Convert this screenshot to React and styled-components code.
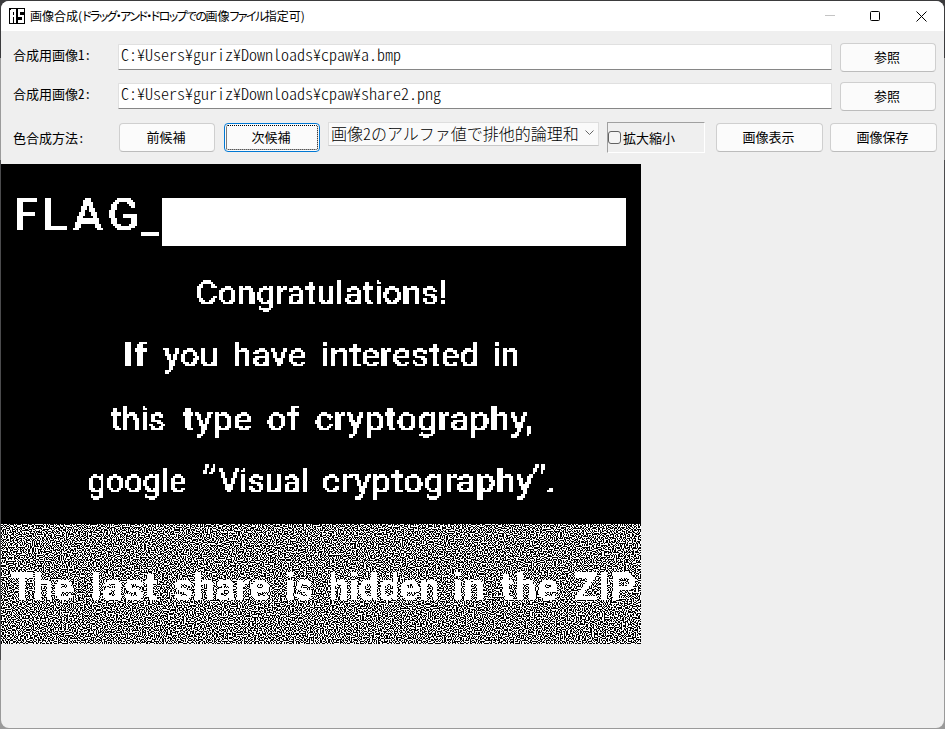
import React, { useEffect, useRef } from "react";
import styled, { createGlobalStyle } from "styled-components";

const GlobalStyle = createGlobalStyle`
  * { box-sizing: border-box; }
  body { margin: 0; background: #29292b; overflow: hidden; }
`;

const jp = `"Noto Sans CJK JP", "Noto Sans", sans-serif`;

const Desktop = styled.div`
  width: 945px;
  height: 729px;
  padding: 1px;
  background: linear-gradient(#3b3b3d 0 8%, #9b9b9b 8% 22%, #4b4b4d 22% 90.500%, #9a9a9a 90.500%);
`;
const Window = styled.main`
  width: 943px;
  height: 727px;
  border-radius: 8px;
  overflow: hidden;
  background: #efefef;
  font-family: ${jp};
  color: #000;
`;
const TitleBar = styled.header`
  height: 30px;
  display: flex;
  align-items: center;
  background: #fff;
  padding-left: 8px;
`;
const Title = styled.h1`
  flex: 1;
  margin: 0 0 0 5px;
  font-size: 12px;
  line-height: 28px;
  font-weight: 400;
  white-space: nowrap;
`;
const TitleText = styled.span`
  display: inline-block;
  font-feature-settings: ${(p) => (p.$tight ? '"palt"' : "normal")};
  letter-spacing: ${(p) => p.$spacing || 0}px;
`;
const CaptionButton = styled.button`
  width: 46px;
  height: 30px;
  padding: 0 0 0 ${(p) => p.$inset || 0}px;
  border: 0;
  background: none;
  display: grid;
  place-items: center;
`;
const Form = styled.section`
  height: 133px;
  padding: 12px 0 0 12px;
`;
const Row = styled.div`
  display: flex;
  align-items: flex-start;
  height: ${(p) => p.$height}px;
`;
const Label = styled.label`
  width: ${(p) => p.$width || 105}px;
  padding-top: ${(p) => p.$top}px;
  font-size: 13px;
  line-height: 18px;
  font-feature-settings: "hwid";
  white-space: nowrap;
`;
const Field = styled.input`
  width: 714px;
  height: 26px;
  margin: 1px 8px 0 0;
  padding: 0 3px 6px 2px;
  border: 1px solid #e0e0e0;
  border-bottom-color: #868686;
  border-radius: 1px;
  outline: 0;
  background: #fff;
  color: #000;
  font: 300 16px/18px ${jp};
  font-feature-settings: "hwid";
`;
const Button = styled.button`
  width: ${(p) => p.$width || 96}px;
  height: 29px;
  margin: ${(p) => p.$drop || 0}px ${(p) => p.$gap || 0}px 0 0;
  padding: 0 2px 2px 0;
  border: 1px solid ${(p) => (p.$focused ? "#0078d4" : "#cfcfcf")};
  border-bottom-color: ${(p) => (p.$focused ? "#0078d4" : "#bcbcbc")};
  border-radius: 4px;
  background: #fbfbfb;
  color: #000;
  font: 400 13px/18px ${jp};
  outline: ${(p) => (p.$focused ? "1px dotted #000" : "none")};
  outline-offset: -3px;
`;
const Combo = styled.div`
  width: 271px;
  height: 24px;
  margin-right: 8px;
  display: flex;
  align-items: center;
  border: 1px solid #dedede;
  border-bottom-color: #c8c8c8;
  background: #fafafa;
  padding: 0 4px 2px 2px;
  font-size: 16px;
  font-weight: 300;
  line-height: 20px;
  font-feature-settings: "hwid";
  white-space: nowrap;
`;
const ComboText = styled.span`
  flex: 1;
`;
const Sunken = styled.label`
  width: 98px;
  height: 31px;
  margin: 0 11px 0 0;
  display: flex;
  align-items: center;
  gap: 2px;
  border: 1px solid;
  border-color: #a0a0a0 #fff #fff #a0a0a0;
  font-size: 13px;
  line-height: 18px;
`;
const Check = styled.span`
  width: 13px;
  height: 13px;
  border: 1px solid #626262;
  border-radius: 3px;
  background: #f5f5f5;
`;
const Preview = styled.figure`
  display: grid;
  width: 640px;
  height: 480px;
  margin: 0;
  background: #000;
  > * { grid-area: 1 / 1; }
`;
const Noise = styled.canvas`
  align-self: end;
  display: block;
`;

function NoiseStrip() {
  const ref = useRef(null);
  useEffect(() => {
    const w = 640;
    const h = 120;
    const ctx = ref.current.getContext("2d");
    const img = ctx.createImageData(w, h);
    let seed = 20117;
    const next = () => {
      seed = (Math.imul(seed, 1664525) + 1013904223) >>> 0;
      return seed / 4294967296;
    };
    // Each 2x2 cell holds exactly two white pixels, as in a visual-cryptography share.
    const cells = [[1, 1, 0, 0], [0, 0, 1, 1], [1, 0, 1, 0], [0, 1, 0, 1], [1, 0, 0, 1], [0, 1, 1, 0]];
    for (let y = 0; y < h; y += 2) {
      for (let x = 0; x < w; x += 2) {
        const c = cells[Math.floor(next() * 6)];
        for (let i = 0; i < 4; i++) {
          const o = ((y + (i >> 1)) * w + x + (i & 1)) * 4;
          img.data[o] = img.data[o + 1] = img.data[o + 2] = c[i] * 255;
          img.data[o + 3] = 255;
        }
      }
    }
    ctx.putImageData(img, 0, 0);
  }, []);
  return <Noise ref={ref} width={640} height={120} />;
}

const Glyphs = styled.text`
  font-family: Roboto, "Liberation Sans", sans-serif;
  font-size: ${(p) => p.$size}px;
  font-weight: ${(p) => p.$weight || 500};
`;
const Quote = styled.text`
  font-family: "Noto Sans", sans-serif;
  font-size: 38px;
  font-weight: 400;
`;

const lines = [
  { y: 140, words: [["Congratulations!", 194, 252]] },
  { y: 202, words: [["If", 121, 25], ["you", 162, 55], ["have", 231, 74], ["interested", 319, 159], ["in", 491, 27]] },
  { y: 266, words: [["this", 109, 55], ["type", 181, 70], ["of", 265, 33], ["cryptography,", 313, 219]] },
  { y: 328, words: [["google", 86, 99], ["Visual", 217, 90], ["cryptography", 320, 212], [".", 544, 10]] },
  { y: 436, size: 39, weight: 700, words: [["The", 9, 63], ["last", 89, 68], ["share", 172, 97], ["is", 284, 27], ["hidden", 327, 111], ["in", 452, 32], ["the", 499, 58], ["ZIP", 572, 63]] },
];

function SecretText() {
  return (
    <svg width="640" height="480" viewBox="0 0 640 480" fill="#fff">
      {/* Samples one pixel of each 2x2 block and spreads it over the block. */}
      <filter id="blocks" x="0" y="0" width="640" height="480" filterUnits="userSpaceOnUse" primitiveUnits="userSpaceOnUse">
        <feFlood x="0" y="0" width="1" height="1" floodColor="#fff" />
        <feComposite in2="SourceGraphic" operator="over" x="0" y="0" width="2" height="2" />
        <feTile result="dots" />
        <feComposite in="SourceGraphic" in2="dots" operator="in" result="a" />
        <feOffset in="a" dx="1" dy="0" result="b" />
        <feOffset in="a" dx="0" dy="1" result="c" />
        <feOffset in="a" dx="1" dy="1" result="d" />
        <feMerge>
          <feMergeNode in="a" />
          <feMergeNode in="b" />
          <feMergeNode in="c" />
          <feMergeNode in="d" />
        </feMerge>
        <feComponentTransfer>
          <feFuncA type="discrete" tableValues="0 1" />
        </feComponentTransfer>
      </filter>
      <rect x="161" y="34" width="464" height="48" />
      <g filter="url(#blocks)">
        <Glyphs $size={46} $weight={500} x="12 41 71 106" y="66">FLAG</Glyphs>
        <Glyphs $size={38} $weight={500} x="140" y="67">_</Glyphs>
        {lines.map((l) =>
          l.words.map(([word, x, w]) => (
            <Glyphs key={x} $size={l.size || 34} $weight={l.weight} x={x} y={l.y} textLength={w} lengthAdjust="spacingAndGlyphs">
              {word}
            </Glyphs>
          ))
        )}
        <Quote x="201" y="327">“</Quote>
        <Quote x="531" y="327">”</Quote>
      </g>
    </svg>
  );
}

const AppIcon = () => (
  <svg width="16" height="16" viewBox="0 0 16 16" shapeRendering="crispEdges">
    <path fill="#000" d="M0 0h16v16H0z" />
    <path fill="#fff" d="M2 1h5v14H5V9H4v6H1V2h1zM9 1h6v3h-4v3h4v8H9v-3h4V9H9z" />
    <path fill="#000" d="M4 4h1v3H4z" />
  </svg>
);

export default function App() {
  return (
    <Desktop>
      <GlobalStyle />
      <Window>
        <TitleBar>
          <AppIcon />
          <Title>
            <TitleText>画像合成(</TitleText>
            <TitleText $tight $spacing={-1.6}>ドラッグ・アンド・ドロップでの</TitleText>
            <TitleText>画像</TitleText>
            <TitleText $tight $spacing={-1.6}>ファイル</TitleText>
            <TitleText>指定可)</TitleText>
          </Title>
          <CaptionButton $inset={2}>
            <svg width="10" height="10"><path d="M0 4.5h10" stroke="#c4c4c4" /></svg>
          </CaptionButton>
          <CaptionButton>
            <svg width="10" height="10" fill="none" stroke="#000"><rect x=".5" y=".5" width="9" height="9" rx="1" /></svg>
          </CaptionButton>
          <CaptionButton>
            <svg width="11" height="11"><path d="M.5 .5l10 10M10.500 .5l-10 10" stroke="#000" /></svg>
          </CaptionButton>
        </TitleBar>
        <Form>
          <Row $height={39}>
            <Label $top={3}>合成用画像1:</Label>
            <Field defaultValue="C:¥Users¥guriz¥Downloads¥cpaw¥a.bmp" />
            <Button>参照</Button>
          </Row>
          <Row $height={40}>
            <Label $top={3}>合成用画像2:</Label>
            <Field defaultValue="C:¥Users¥guriz¥Downloads¥cpaw¥share2.png" />
            <Button>参照</Button>
          </Row>
          <Row $height={31}>
            <Label $top={7} $width={106}>色合成方法:</Label>
            <Button $drop={1} $gap={9}>前候補</Button>
            <Button $drop={1} $gap={8} $focused>次候補</Button>
            <Combo>
              <ComboText>画像2のアルファ値で排他的論理和</ComboText>
              <svg width="9" height="6"><path d="M.5 .5l4 4l4-4" fill="none" stroke="#666" /></svg>
            </Combo>
            <Sunken><Check />拡大縮小</Sunken>
            <Button $drop={1} $width={107} $gap={7}>画像表示</Button>
            <Button $drop={1} $width={107}>画像保存</Button>
          </Row>
        </Form>
        <Preview>
          <NoiseStrip />
          <SecretText />
        </Preview>
      </Window>
    </Desktop>
  );
}
